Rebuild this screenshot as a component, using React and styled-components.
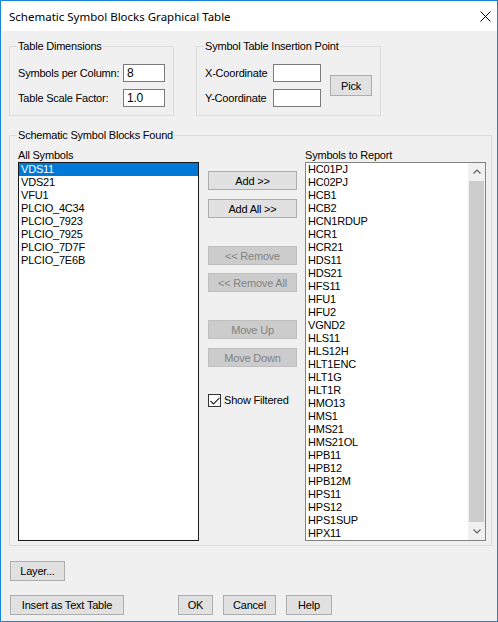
import React from "react";
import styled, { createGlobalStyle } from "styled-components";

const GlobalStyle = createGlobalStyle`
  html, body {
    margin: 0;
    padding: 0;
    background: #ffffff;
  }
  * {
    box-sizing: border-box;
  }
`;

const Window = styled.div`
  width: 498px;
  height: 622px;
  border: 1px solid #1883d7;
  display: flex;
  flex-direction: column;
  font-family: "Liberation Sans", Arial, sans-serif;
  font-size: 11px;
  letter-spacing: -0.2px;
  color: #000;
`;

const TitleBar = styled.div`
  height: 30px;
  background: #fff;
  display: flex;
  align-items: center;
  justify-content: space-between;
  padding: 0 6px 0 8px;
`;

const Title = styled.span`
  font-family: "Noto Sans", "Open Sans", sans-serif;
  font-size: 11.5px;
  letter-spacing: 0;
  color: #000;
`;

const Body = styled.div`
  flex: 1;
  background: #f0f0f0;
  padding: 15px 5px 0 8px;
  display: flex;
  flex-direction: column;
`;

const TopRow = styled.div`
  display: flex;
  gap: 22px;
`;

const Group = styled.div`
  position: relative;
  width: ${(p) => p.$width}px;
  height: ${(p) => p.$height}px;
  border: 1px solid #dcdcdc;
  padding: ${(p) => p.$pad || "17px 8px 7px 8px"};
`;

const Caption = styled.span`
  position: absolute;
  top: -7px;
  left: 7px;
  padding: 0 1px;
  line-height: 13px;
  background: #f0f0f0;
`;

const FieldRow = styled.div`
  display: flex;
  align-items: center;
  justify-content: space-between;
  height: 18px;
  & + & {
    margin-top: 7px;
  }
`;

const Label = styled.span`
  line-height: 13px;
  white-space: nowrap;
`;

const TextBox = styled.div`
  width: ${(p) => p.$width}px;
  height: 18px;
  border: 1px solid #7a7a7a;
  background: #fff;
  padding-left: 3px;
  line-height: 16px;
  font-size: 12px;
`;

const InsertGrid = styled.div`
  display: flex;
  align-items: center;
`;

const Coords = styled.div`
  width: 116px;
`;

const Button = styled.div`
  width: ${(p) => p.$width}px;
  height: ${(p) => p.$height || 20}px;
  margin-top: ${(p) => p.$top || 0}px;
  margin-left: ${(p) => p.$left || 0}px;
  background: ${(p) => (p.$disabled ? "#cccccc" : "#e1e1e1")};
  border: 1px solid ${(p) => (p.$disabled ? "#bfbfbf" : "#adadad")};
  color: ${(p) => (p.$disabled ? "#838383" : "#000")};
  display: flex;
  align-items: center;
  justify-content: center;
  white-space: nowrap;
  flex-shrink: 0;
`;

const FoundGroup = styled(Group)`
  margin-top: 19px;
  display: flex;
  gap: 8px;
`;

const Column = styled.div`
  display: flex;
  flex-direction: column;
  width: ${(p) => p.$width}px;
`;

const ListLabel = styled.div`
  height: 13px;
  line-height: 13px;
`;

const ListBox = styled.div`
  height: 379px;
  background: #fff;
  border: 1px solid ${(p) => p.$border};
  display: flex;
  overflow: hidden;
`;

const Items = styled.div`
  flex: 1;
  display: flex;
  flex-direction: column;
`;

const Item = styled.div`
  height: 13px;
  line-height: 13px;
  padding-left: 2px;
  background: ${(p) => (p.$selected ? "#0078d7" : "transparent")};
  color: ${(p) => (p.$selected ? "#fff" : "#000")};
  white-space: nowrap;
`;

const ScrollBar = styled.div`
  width: 17px;
  background: #f0f0f0;
  display: flex;
  flex-direction: column;
`;

const Arrow = styled.div`
  height: 17px;
  display: flex;
  align-items: center;
  justify-content: center;
`;

const Thumb = styled.div`
  flex: 1;
  margin: 1px 1px;
  background: #cdcdcd;
`;

const Middle = styled.div`
  width: 89px;
  margin-left: 1px;
  padding-top: 22px;
  display: flex;
  flex-direction: column;
`;

const CheckRow = styled.div`
  display: flex;
  align-items: center;
  margin-top: 27px;
`;

const CheckBox = styled.div`
  width: 13px;
  height: 13px;
  border: 1px solid #333;
  background: #fff;
  display: flex;
  align-items: center;
  justify-content: center;
  margin-right: 3px;
`;

const BottomRow = styled.div`
  display: flex;
  margin-top: ${(p) => p.$top}px;
  padding-left: 1px;
`;

const allSymbols = [
  "VDS11",
  "VDS21",
  "VFU1",
  "PLCIO_4C34",
  "PLCIO_7923",
  "PLCIO_7925",
  "PLCIO_7D7F",
  "PLCIO_7E6B",
];

const reportSymbols = [
  "HC01PJ", "HC02PJ", "HCB1", "HCB2", "HCN1RDUP", "HCR1", "HCR21", "HDS11",
  "HDS21", "HFS11", "HFU1", "HFU2", "VGND2", "HLS11", "HLS12H", "HLT1ENC",
  "HLT1G", "HLT1R", "HMO13", "HMS1", "HMS21", "HMS21OL", "HPB11", "HPB12",
  "HPB12M", "HPS11", "HPS12", "HPS1SUP", "HPX11",
];

const Chevron = ({ up }) => (
  <svg width="8" height="5" viewBox="0 0 8 5">
    <polyline
      points={up ? "0.5,4.5 4,1 7.5,4.5" : "0.5,0.5 4,4 7.5,0.5"}
      fill="none"
      stroke="#606060"
      strokeWidth="1.2"
    />
  </svg>
);

export default function App() {
  return (
    <>
      <GlobalStyle />
      <Window>
        <TitleBar>
          <Title>Schematic Symbol Blocks Graphical Table</Title>
          <svg width="11" height="11" viewBox="0 0 11 11">
            <path d="M0.5 0.5 L10.5 10.5 M10.5 0.5 L0.5 10.5" stroke="#000" strokeWidth="1" />
          </svg>
        </TitleBar>
        <Body>
          <TopRow>
            <Group $width={165} $height={70}>
              <Caption>Table Dimensions</Caption>
              <FieldRow>
                <Label>Symbols per Column:</Label>
                <TextBox $width={42}>8</TextBox>
              </FieldRow>
              <FieldRow>
                <Label>Table Scale Factor:</Label>
                <TextBox $width={42}>1.0</TextBox>
              </FieldRow>
            </Group>
            <Group $width={185} $height={70}>
              <Caption>Symbol Table Insertion Point</Caption>
              <InsertGrid>
                <Coords>
                  <FieldRow>
                    <Label>X-Coordinate</Label>
                    <TextBox $width={48} />
                  </FieldRow>
                  <FieldRow>
                    <Label>Y-Coordinate</Label>
                    <TextBox $width={48} />
                  </FieldRow>
                </Coords>
                <Button $width={42} $height={21} $left={9}>Pick</Button>
              </InsertGrid>
            </Group>
          </TopRow>

          <FoundGroup $width={483} $height={411} $pad="13px 5px 4px 8px">
            <Caption>Schematic Symbol Blocks Found</Caption>
            <Column $width={181}>
              <ListLabel>All Symbols</ListLabel>
              <ListBox $border="#1a1a1a">
                <Items>
                  {allSymbols.map((s, i) => (
                    <Item key={s} $selected={i === 0}>{s}</Item>
                  ))}
                </Items>
              </ListBox>
            </Column>
            <Middle>
              <Button $width={89} $height={19}>Add &gt;&gt;</Button>
              <Button $width={89} $height={19} $top={9}>Add All &gt;&gt;</Button>
              <Button $width={89} $height={19} $top={28} $disabled>&lt;&lt; Remove</Button>
              <Button $width={89} $height={19} $top={8} $disabled>&lt;&lt; Remove All</Button>
              <Button $width={89} $height={19} $top={28} $disabled>Move Up</Button>
              <Button $width={89} $height={19} $top={9} $disabled>Move Down</Button>
              <CheckRow>
                <CheckBox>
                  <svg width="10" height="8" viewBox="0 0 10 8">
                    <polyline points="0.5,4 3.5,7 9.5,0.8" fill="none" stroke="#222" strokeWidth="1.1" />
                  </svg>
                </CheckBox>
                <Label>Show Filtered</Label>
              </CheckRow>
            </Middle>
            <Column $width={181}>
              <ListLabel>Symbols to Report</ListLabel>
              <ListBox $border="#828282">
                <Items>
                  {reportSymbols.map((s) => (
                    <Item key={s}>{s}</Item>
                  ))}
                </Items>
                <ScrollBar>
                  <Arrow><Chevron up /></Arrow>
                  <Thumb />
                  <Arrow><Chevron /></Arrow>
                </ScrollBar>
              </ListBox>
            </Column>
          </FoundGroup>

          <BottomRow $top={15}>
            <Button $width={55}>Layer...</Button>
          </BottomRow>
          <BottomRow $top={14}>
            <Button $width={114}>Insert as Text Table</Button>
            <Button $width={35} $left={54}>OK</Button>
            <Button $width={53} $left={10}>Cancel</Button>
            <Button $width={46} $left={10}>Help</Button>
          </BottomRow>
        </Body>
      </Window>
    </>
  );
}
